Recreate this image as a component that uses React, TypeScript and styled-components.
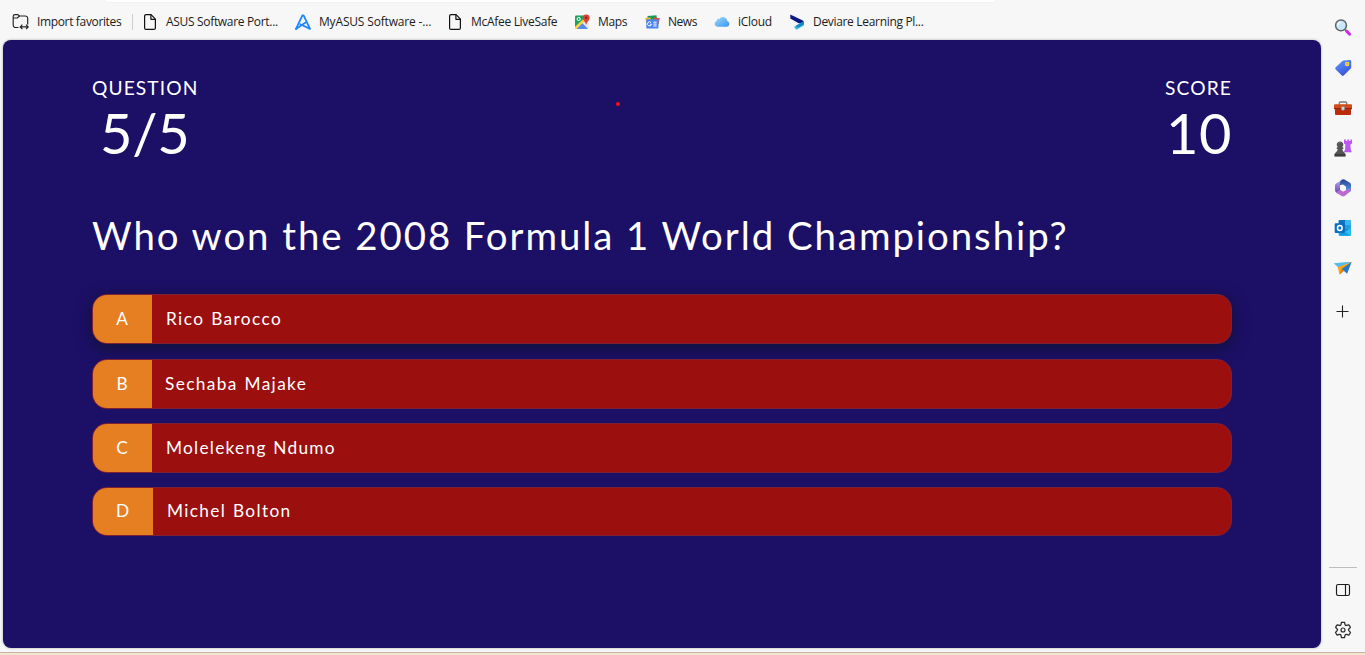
import React from "react";
import styled, { createGlobalStyle } from "styled-components";

const GlobalStyle = createGlobalStyle`
  *, *::before, *::after { box-sizing: border-box; }
  body { margin: 0; background: #f7f7f7; overflow: hidden; }
`;

const Window = styled.div`
  width: 1365px;
  height: 655px;
  display: flex;
  flex-direction: column;
  background: #f7f7f7;
  font-family: "Open Sans", "Noto Sans", sans-serif;
  color: #1b1b1b;
`;

const Body = styled.div`
  flex: 1;
  display: flex;
  min-height: 0;
`;

const PageColumn = styled.div`
  width: 1321px;
  display: flex;
  flex-direction: column;
`;

const AddressBarEdge = styled.div`
  height: 2px;
  width: 890px;
  margin-left: 105px;
  background: #ffffff;
  border-radius: 0 0 8px 8px;
  box-shadow: 0 0 2px rgba(0, 0, 0, 0.08);
`;

const FavoritesBar = styled.nav`
  height: 38px;
  display: flex;
  align-items: center;
  padding: 2px 0 0 12px;
`;

const Favorite = styled.div<{ $width: number; $gap: number }>`
  width: ${(p) => p.$width}px;
  display: flex;
  align-items: center;
  gap: ${(p) => p.$gap}px;
  flex-shrink: 0;

  svg { display: block; flex-shrink: 0; }
`;

const FavoriteLabel = styled.span<{ $tracking: number }>`
  font-size: 12px;
  line-height: 18px;
  white-space: nowrap;
  letter-spacing: ${(p) => p.$tracking}px;
`;

const BarDivider = styled.div`
  width: 1px;
  height: 16px;
  margin-right: 11px;
  background: #cdcdcd;
`;

const Quiz = styled.main`
  width: 1318px;
  height: 608px;
  margin-left: 3px;
  padding: 36px 89px 0;
  border-radius: 8px;
  background: #1c0f66;
  box-shadow: 0 0 3px rgba(0, 0, 0, 0.3);
  color: #ffffff;
  font-family: Lato, "Liberation Sans", sans-serif;
  position: relative;
`;

const Hud = styled.header`
  display: flex;
  justify-content: space-between;
  height: 123px;
`;

const HudItem = styled.div`
  display: flex;
  flex-direction: column;
  align-items: center;
`;

const HudLabel = styled.div`
  font-size: 19.2px;
  line-height: 24px;
  letter-spacing: 1.1px;
  margin-right: -1px;
`;

const HudValue = styled.div<{ $shift?: number; $tracking: number }>`
  font-size: 56px;
  line-height: 66px;
  letter-spacing: ${(p) => p.$tracking}px;
  padding-left: ${(p) => p.$shift ?? 0}px;
`;

const QuestionTitle = styled.h1`
  margin: 0;
  height: 95px;
  font-size: 38.4px;
  font-weight: 400;
  line-height: 72px;
  letter-spacing: 1.94px;
  white-space: nowrap;
`;

const Choices = styled.div`
  display: flex;
  flex-direction: column;
`;

const Choice = styled.div<{ $height: number; $gap: number; $raised?: boolean }>`
  height: ${(p) => p.$height}px;
  margin-bottom: ${(p) => p.$gap}px;
  width: 1140px;
  display: flex;
  overflow: hidden;
  border: 1px solid #7d2135;
  border-radius: 15px;
  background: #9b100f;
  box-shadow: ${(p) => (p.$raised ? "0 4px 16px rgba(14, 20, 40, 0.75)" : "none")};
  font-size: 17.28px;
`;

const ChoiceLetter = styled.div<{ $width: number; $lift: number }>`
  width: ${(p) => p.$width}px;
  padding: 0 1px ${(p) => p.$lift}px 0;
  display: flex;
  align-items: center;
  justify-content: center;
  background: #e67e22;
`;

const ChoiceText = styled.div<{ $tracking: number; $indent: number; $lift: number }>`
  display: flex;
  align-items: center;
  padding: 0 0 ${(p) => p.$lift}px ${(p) => p.$indent}px;
  letter-spacing: ${(p) => p.$tracking}px;
  word-spacing: 1px;
  white-space: nowrap;
`;

const PointerDot = styled.span`
  position: absolute;
  left: 613px;
  top: 62px;
  width: 4px;
  height: 4px;
  border-radius: 2px;
  background: #f01414;
`;

const Sidebar = styled.aside`
  width: 44px;
  padding-top: 18px;
  display: flex;
  flex-direction: column;
  align-items: center;
`;

const SidebarButton = styled.div<{ $gap: number }>`
  width: 20px;
  height: 20px;
  margin-bottom: ${(p) => p.$gap}px;
  flex-shrink: 0;
  svg { display: block; }
`;

const SidebarRule = styled.div`
  width: 28px;
  height: 1px;
  margin: 245px 0 12px;
  background: #bcbcbc;
`;

const TaskbarEdge = styled.footer`
  height: 3px;
  border-top: 1px solid #c3b5a8;
  background: #f5e4cf;
`;

const ImportIcon = () => (
  <svg width="17" height="16" viewBox="0 0 17 16" fill="none" stroke="#222" strokeWidth="1.15">
    <path d="M6.5 13.5H3.6A2.4 2.4 0 0 1 1.2 11.1V2.5A1.9 1.9 0 0 1 3.1.6h2.6L7.5 2h5.8a2.4 2.4 0 0 1 2.4 2.4v6" />
    <path d="M1.3 4h4L7.5 2M8.4 12.9h7.6M10.4 10.7l-2.2 2.2 2.2 2.2M14 10.7l2.2 2.2-2.2 2.2" />
  </svg>
);

const PageIcon = () => (
  <svg width="12" height="16" viewBox="0 0 12 16" fill="none" stroke="#111" strokeWidth="1.2" strokeLinejoin="round">
    <path d="M2 .6h5.1l4.3 4.5v8.8a1.5 1.5 0 0 1-1.5 1.5H2A1.5 1.5 0 0 1 .6 13.9V2A1.4 1.4 0 0 1 2 .6Z" />
    <path d="M6.9.8v4.5h4.4" />
  </svg>
);

const AsusIcon = () => (
  <svg width="16" height="16" viewBox="0 0 16 16" fill="none" stroke="#1f86ff" strokeWidth="1.8" strokeLinejoin="round" strokeLinecap="round">
    <path d="M1 14.9 7.4 1.3h1.2L15 14.9 5.4 10.2" />
    <path d="M1 14.9 10.6 8.6" />
  </svg>
);

const MapsIcon = () => (
  <svg width="15" height="16" viewBox="0 0 15 16">
    <rect x="0" y="1.5" width="13.5" height="13.5" rx="1.3" fill="#e4e8ec" />
    <path d="M1.3 1.5H10L7 8 0 14.5V2.8Q0 1.5 1.3 1.5Z" fill="#1fa15d" />
    <path d="m1 15 6-6.3L13 15Z" fill="#4c83ee" />
    <path d="M0 12.8 9.4 4l1.8 1.8L2 15H0Z" fill="#fdd246" />
    <path d="m7 9.8 5 5.2H2Z" fill="#5989ee" />
    <circle cx="3.7" cy="5" r="1.6" fill="none" stroke="#fff" strokeWidth="1" />
    <path d="M11.2.4a3.4 3.4 0 0 1 3.5 3.5c0 2.4-2.7 3.3-3.3 6.7h-.4C10.3 7.2 7.7 6.3 7.7 3.9A3.4 3.4 0 0 1 11.2.4Z" fill="#df4437" />
    <circle cx="11.2" cy="3.8" r="1.2" fill="#842321" />
  </svg>
);

const NewsIcon = () => (
  <svg width="15" height="14" viewBox="0 0 15 14">
    <path d="M2.5 1 11.5.2 12 5H2.5Z" fill="#1b9a57" />
    <path d="M.2 3 5.5 2.5l1 5L1.5 9Z" fill="#efb82c" />
    <path d="m9 2.5 5.8.8-1.2 6-5-1Z" fill="#e34b3d" />
    <rect x="1.3" y="4.2" width="12.2" height="9.3" rx="1" fill="#4b86ee" />
    <path d="M6 7.5A2 2 0 1 0 6.5 9.2H4.9M8.4 7.2h3.2M8.4 9.1h3.2M8.4 11h3.2" stroke="#fff" fill="none" strokeWidth="1" />
  </svg>
);

const CloudIcon = () => (
  <svg width="16" height="12" viewBox="0 0 16 12">
    <defs>
      <linearGradient id="cloud" x1="0" y1="0" x2="1" y2="1">
        <stop offset="0" stopColor="#9ddcff" />
        <stop offset="1" stopColor="#3893ee" />
      </linearGradient>
    </defs>
    <path d="M3.5 10.8a3 3 0 0 1-1-5.8 2.4 2.4 0 0 1 2.8-2.1A4.5 4.5 0 0 1 13.4 5 3 3 0 0 1 12.8 10.8Z" fill="url(#cloud)" />
  </svg>
);

const DeviareIcon = () => (
  <svg width="15" height="16" viewBox="0 0 15 16">
    <path d="M.3.5 12.8 6.4q2 1.4.1 2.8L8.6 9.3.3 4.6Z" fill="#0c1b83" />
    <path d="M14 7.2v3.3q0 1-1 1.6L6.3 15.7 4 13.1Z" fill="#35b5df" />
    <path d="m10 9.3 4-1.6v2.5L8 13.5 5.6 12Z" fill="#1688c7" />
  </svg>
);

const SearchIcon = () => (
  <svg width="20" height="20" viewBox="0 0 20 20">
    <path d="m11.5 12.5 1.5-1.3 2 1.8-1.3 1.4Z" fill="#555" />
    <path d="m13.8 13.4 2.8 2.7" stroke="#c832e5" strokeWidth="3" strokeLinecap="round" />
    <circle cx="8" cy="7.4" r="5.4" fill="#c9e9fa" stroke="#606468" strokeWidth="1.5" />
    <path d="M4.8 7.4A3.3 3.3 0 0 1 8 4.2" stroke="#fff" fill="none" strokeWidth="1.2" />
  </svg>
);

const TagIcon = () => (
  <svg width="20" height="20" viewBox="0 0 20 20">
    <defs>
      <linearGradient id="tag" x1="0" y1="0" x2=".6" y2="1">
        <stop offset="0" stopColor="#5b9df8" />
        <stop offset="1" stopColor="#3c51e0" />
      </linearGradient>
    </defs>
    <path d="M10.6 2.4 17 2q1.2 0 1.2 1.2v6q0 .7-.5 1.2L11 17.3q-1.3 1.2-2.4 0L2.7 11.6q-1.2-1.2 0-2.3l6.7-6.4q.5-.5 1.2-.5Z" fill="url(#tag)" />
    <circle cx="14.2" cy="5.9" r="1.7" fill="#b8b47b" stroke="#ffda33" strokeWidth="1.1" />
  </svg>
);

const ToolboxIcon = () => (
  <svg width="20" height="20" viewBox="0 0 20 20">
    <path d="M6.2 7V5.4Q6.2 4 7.6 4h4.8q1.4 0 1.4 1.4V7" fill="none" stroke="#777" strokeWidth="1.3" />
    <path d="M2 6.3h16q1 0 1 1v4H1v-4q0-1 1-1Z" fill="#d44a18" />
    <path d="M2 11h16v5q0 1-1 1H3q-1 0-1-1Z" fill="#b92d0d" />
    <path d="M1 10.5h18" stroke="#8d260e" />
    <path d="M8.3 8.4h3.4v3.2q-1.7 2-3.4 0Z" fill="#ccd1d4" stroke="#78706c" strokeWidth=".5" />
  </svg>
);

const ChessIcon = () => (
  <svg width="20" height="20" viewBox="0 0 20 20">
    <defs>
      <linearGradient id="rook" x1="0" y1="0" x2="0" y2="1">
        <stop offset="0" stopColor="#c453f7" />
        <stop offset="1" stopColor="#b05af2" />
      </linearGradient>
    </defs>
    <path d="M11 1.5h1.8V3h1.5V1.5h1.8V3h1.4V1.5H19v4l-1.7 1.1.5 5.2 1 2.4h-8l1.2-2.4.4-5.2L11 5.5Z" fill="url(#rook)" />
    <path d="M7.2 3.4a3.2 3.2 0 0 1 2.2 5.5l.9.8v1.2H9.2q.3 2.3 2.6 4l.6 1v2.6H1.6v-2.6l.7-1q2.2-1.7 2.5-4H3.7V9.7l1-.8a3.2 3.2 0 0 1 2.5-5.5Z" fill="#555" />
    <path d="M1.6 16h10.8v2.3H1.6Z" fill="#3c3c3c" />
    <path d="M5.6 5.4q.7-1 1.8-.9" stroke="#888" fill="none" />
  </svg>
);

const OfficeIcon = () => (
  <svg width="20" height="20" viewBox="0 0 20 20">
    <defs>
      <linearGradient id="officeA" x1="0" y1="0" x2="0" y2="1">
        <stop offset="0" stopColor="#b9a9f0" />
        <stop offset="1" stopColor="#6746b9" />
      </linearGradient>
      <linearGradient id="officeB" x1="0" y1="0" x2="0" y2="1">
        <stop offset="0" stopColor="#253f91" />
        <stop offset="1" stopColor="#5ea9ef" />
      </linearGradient>
    </defs>
    <path d="M9.4 1.4Q7 3 7 6v4.2l2 3.2-4 2.1-1.8-1Q2 13.6 2 12.2V7.5q0-1.4 1.1-2Z" fill="url(#officeA)" />
    <path d="M9.3 1.4q1-.4 2 .2l5.6 3.2q1.1.7 1.1 2V12q0 1.4-1.1 2l-2 .8q-1.9.5-1.9-1V9L10 6.4 7 7.3V5.1q0-2.8 2.3-3.7Z" fill="url(#officeB)" />
    <path d="m3 14.4 4.2-2.6 3 1.8 3.8-2.2L18 11q0 2-1.5 3L12 17.8q-2 1-3.4.3Z" fill="#bd69d2" />
    <path d="m9.3 6.8 3.2 1.5.3 3.5-2.8 1.8-3-1.8V8Z" fill="#faf8ff" />
  </svg>
);

const OutlookIcon = () => (
  <svg width="20" height="20" viewBox="0 0 20 20">
    <rect x="5.5" y="2" width="12.2" height="14" rx="1" fill="#168bd8" />
    <path d="M6 2h6v5H6Z" fill="#1373bd" />
    <path d="M12 2h5.7v5H12Z" fill="#38b8f0" />
    <path d="M12 7h5.7v4H12Z" fill="#20a0df" />
    <path d="m6 10.5 6 3.2 6-4v7q0 1.3-1.3 1.3H7q-1.3 0-1.3-1.3Z" fill="#2bbcf0" />
    <path d="m6 11 11.7 6.4H7.2Q6 17.4 6 16Z" fill="#139ddf" />
    <rect x="1.7" y="5.2" width="10.2" height="9.8" rx="1" fill="#096fc2" />
    <ellipse cx="6.8" cy="10.1" rx="2.3" ry="2.5" fill="none" stroke="#fff" strokeWidth="1.5" />
  </svg>
);

const PlaneIcon = () => (
  <svg width="20" height="20" viewBox="0 0 20 20">
    <path d="M1 5.2 18.6 4 6.4 10.3Z" fill="#54bdee" />
    <path d="m18.6 4-12 5.4v7.1Z" fill="#e28b10" />
    <path d="M18.6 4 9 10.2l-2.4 6.3L4.6 9Z" fill="#f9a91b" />
    <path d="M1 5.2 18.6 4 4.8 8.8Z" fill="#54bdee" />
    <path d="M18.6 4 14.1 15.8 8.8 11Z" fill="#2379d0" />
    <path d="m6.6 16.5 2.2-5.4 2.2 2Z" fill="#e47c0c" />
  </svg>
);

const PlusIcon = () => (
  <svg width="20" height="20" viewBox="0 0 20 20">
    <path d="M9.5 3.5v12M3.5 9.5h12" stroke="#222" strokeWidth="1.1" />
  </svg>
);

const PanelIcon = () => (
  <svg width="20" height="20" viewBox="0 0 20 20" fill="none" stroke="#1c1c1c" strokeWidth="1.15">
    <rect x="3.5" y="4.5" width="13" height="11" rx="1.7" />
    <path d="M12.5 4.5v11" />
  </svg>
);

const GearIcon = () => (
  <svg width="20" height="20" viewBox="0 0 20 20" fill="none" stroke="#292929" strokeWidth="1.15" strokeLinejoin="round">
    <path
      d="M8.6 1.9q1.4-.3 2.8 0l.4 1.9q.3 1 1.3.8l2-.6q1 .9 1.6 2.3l-1.4 1.5q-.7.8 0 1.5l1.5 1.6q-.5 1.4-1.5 2.5l-2.1-.7q-1-.2-1.4.9l-.4 2q-1.4.3-2.8 0l-.4-2q-.4-1.1-1.4-.9l-2.1.7q-1-1.1-1.5-2.5l1.5-1.6q.7-.7 0-1.5L3.3 6.3Q3.9 4.9 4.9 4l2 .6q1 .2 1.3-.8Z"
      transform="translate(-1 .4) scale(1.1)"
    />
    <circle cx="10" cy="10" r="2" />
  </svg>
);

const favorites = [
  { label: "ASUS Software Port...", icon: <PageIcon />, width: 151, gap: 10, tracking: -0.32 },
  { label: "MyASUS Software -...", icon: <AsusIcon />, width: 154, gap: 8, tracking: -0.17 },
  { label: "McAfee LiveSafe", icon: <PageIcon />, width: 126, gap: 10, tracking: -0.3 },
  { label: "Maps", icon: <MapsIcon />, width: 70, gap: 8, tracking: -0.35 },
  { label: "News", icon: <NewsIcon />, width: 69, gap: 8, tracking: -0.45 },
  { label: "iCloud", icon: <CloudIcon />, width: 76, gap: 8, tracking: -0.3 },
  { label: "Deviare Learning Pl...", icon: <DeviareIcon />, width: 140, gap: 8, tracking: -0.32 },
];

const choices = [
  { letter: "A", text: "Rico Barocco", height: 50, gap: 15, letterWidth: 59, indent: 14, tracking: 1.4, lift: 1, raised: true },
  { letter: "B", text: "Sechaba Majake", height: 50, gap: 14, letterWidth: 59, indent: 13, tracking: 1.37, lift: 1 },
  { letter: "C", text: "Molelekeng Ndumo", height: 50, gap: 14, letterWidth: 59, indent: 14, tracking: 1.27, lift: 1 },
  { letter: "D", text: "Michel Bolton", height: 49, gap: 0, letterWidth: 60, indent: 14, tracking: 1.35, lift: 3 },
];

const tools = [
  { id: "search", icon: <SearchIcon />, gap: 20 },
  { id: "shopping", icon: <TagIcon />, gap: 20 },
  { id: "tools", icon: <ToolboxIcon />, gap: 20 },
  { id: "games", icon: <ChessIcon />, gap: 20 },
  { id: "office", icon: <OfficeIcon />, gap: 20 },
  { id: "outlook", icon: <OutlookIcon />, gap: 20 },
  { id: "drop", icon: <PlaneIcon />, gap: 24 },
  { id: "add", icon: <PlusIcon />, gap: 0 },
];

export default function App() {
  return (
    <Window>
      <GlobalStyle />
      <Body>
        <PageColumn>
          <AddressBarEdge />
          <FavoritesBar>
            <Favorite $width={120} $gap={8}>
              <ImportIcon />
              <FavoriteLabel $tracking={-0.35}>Import favorites</FavoriteLabel>
            </Favorite>
            <BarDivider />
            {favorites.map((f) => (
              <Favorite key={f.label} $width={f.width} $gap={f.gap}>
                {f.icon}
                <FavoriteLabel $tracking={f.tracking}>{f.label}</FavoriteLabel>
              </Favorite>
            ))}
          </FavoritesBar>
          <Quiz>
            <Hud>
              <HudItem>
                <HudLabel>QUESTION</HudLabel>
                <HudValue $tracking={-0.3}>5/5</HudValue>
              </HudItem>
              <HudItem>
                <HudLabel>SCORE</HudLabel>
                <HudValue $tracking={0.5} $shift={2}>10</HudValue>
              </HudItem>
            </Hud>
            <QuestionTitle>Who won the 2008 Formula 1 World Championship?</QuestionTitle>
            <Choices>
              {choices.map((c) => (
                <Choice key={c.letter} $height={c.height} $gap={c.gap} $raised={c.raised}>
                  <ChoiceLetter $width={c.letterWidth} $lift={c.lift}>{c.letter}</ChoiceLetter>
                  <ChoiceText $tracking={c.tracking} $indent={c.indent} $lift={c.lift}>{c.text}</ChoiceText>
                </Choice>
              ))}
            </Choices>
            <PointerDot />
          </Quiz>
        </PageColumn>
        <Sidebar>
          {tools.map((t) => (
            <SidebarButton key={t.id} $gap={t.gap}>{t.icon}</SidebarButton>
          ))}
          <SidebarRule />
          <SidebarButton $gap={20}><PanelIcon /></SidebarButton>
          <SidebarButton $gap={0}><GearIcon /></SidebarButton>
        </Sidebar>
      </Body>
      <TaskbarEdge />
    </Window>
  );
}
